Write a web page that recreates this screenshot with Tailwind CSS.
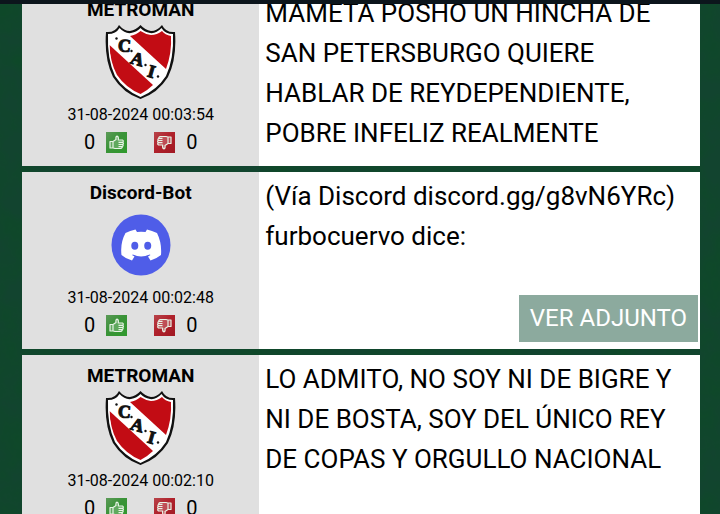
<!DOCTYPE html>
<html lang="es">
<head>
<meta charset="utf-8">
<meta name="viewport" content="width=device-width, initial-scale=1">
<title>Mensajes</title>
<script src="https://cdn.jsdelivr.net/npm/@tailwindcss/browser@4"></script>
</head>
<body class="relative h-screen overflow-hidden bg-[#12442f] font-['Roboto','Liberation_Sans',sans-serif] text-black">
<svg class="absolute inset-0 h-full w-full" aria-hidden="true">
  <defs>
    <filter id="felt" x="0" y="0" width="100%" height="100%" color-interpolation-filters="sRGB">
      <feTurbulence type="fractalNoise" baseFrequency=".03" numOctaves="5" seed="4"/>
      <feColorMatrix values="0 0 0 0 .05  0 0 0 0 .29  0 0 0 0 .15  1.600 0 0 0 -.5"/>
    </filter>
    <linearGradient id="green" x1="0" y1="0" x2="1" y2="1"><stop offset="0" stop-color="#5c9a58"/><stop offset=".45" stop-color="#3a9338"/><stop offset="1" stop-color="#2f9a2c"/></linearGradient>
    <linearGradient id="red" x1="0" y1="0" x2="1" y2="1"><stop offset="0" stop-color="#b8444a"/><stop offset=".45" stop-color="#b0222c"/><stop offset="1" stop-color="#a01822"/></linearGradient>
    <clipPath id="field"><path d="M4.500 10.500Q11 10.500 14.500 4.500Q20 11 25 9.500Q31 9 35.500 4.500Q40 9 46 9.500Q52 10.500 57 4.500Q60 10 67 10.500Q68 35 60 51Q51 65 35.500 72Q20 65 11 51Q3 35 4.500 10.500Z"/></clipPath>
  </defs>
  <rect width="100%" height="100%" filter="url(#felt)"/>
  <symbol id="crest" viewBox="0 0 71 76">
    <path d="M1 8Q10 9 14 1Q19 7 25 7Q31 6 35.500 1Q40 6 46 7Q52 7 57 1Q61 9 70 8Q72 35 63 53Q53 69 35.500 75Q18 69 8 53Q-1 35 1 8Z" fill="#111"/>
    <path d="M3 10Q11 10 14.500 4Q20 10 26 9Q32 8 35.500 4Q39 8 45 9Q51 10 56.500 4Q60 10 68 10Q69 35 61 52Q52 66 35.500 73Q19 66 10 52Q2 35 3 10Z" fill="#fff"/>
    <g clip-path="url(#field)" fill="#c20c14">
      <path d="M25 12Q31 11 35.500 7Q40 10 46 11Q52 11 57 7Q60 11 66 12Q67 29 61 45Z"/>
      <path d="M4.500 21L48 61Q43 66 35.500 70Q21 64 12 51Q5 38 4.500 21Z"/>
    </g>
    <g fill="#111" font-family="Liberation Serif" font-weight="700" font-size="18" text-anchor="middle" stroke="#111" stroke-width="1">
      <text transform="translate(19.500 21.500) rotate(5)" y="6">C</text>
      <text transform="translate(32.500 35) rotate(16)" y="6">A</text>
      <text transform="translate(46.500 47.500) rotate(16)" y="6">I</text>
    </g>
    <g fill="#111"><circle cx="11.500" cy="14.500" r="1.200"/><circle cx="26.500" cy="27" r="1.200"/><circle cx="40.500" cy="41" r="1.200"/><circle cx="53" cy="52.500" r="1.200"/></g>
  </symbol>
  <symbol id="discord" viewBox="0 0 60 62">
    <ellipse cx="30" cy="31" rx="29.500" ry="30.500" fill="#4f5de8"/>
    <path d="M24.500 15.500Q19 16.500 14.500 19Q9 29 10.500 41Q15 45 21 46.500L23.500 42.500L21 41L22 40.500Q30 44.500 38.500 40.500L39.500 41L37 42.500L39.500 46.500Q45 45 50 41Q51 29 46 19Q41 16.500 36 15.500L34.500 18Q30 17.400 26 18Z" fill="#fff"/>
    <ellipse cx="23.800" cy="31.800" rx="3.500" ry="4" fill="#4f5de8"/><ellipse cx="36.700" cy="31.800" rx="3.500" ry="4" fill="#4f5de8"/>
  </symbol>
  <symbol id="hand" viewBox="0 0 21 21">
    <path d="M4 9.500H7V16H4ZM7 9.500L10 7.500Q9.500 4.500 11 4.200Q12.800 4.500 12.300 8H16.500Q18 9 16.700 10.300Q18 11.500 16.800 12.500Q17.600 13.800 16.300 14.600Q16.500 16 15 16.500H9L7 16M12.500 10.300H16.500M12.500 12.500H16.500M12.500 14.600H16" fill="#ffffff33" stroke="#e8f3e6" stroke-width="1.200" stroke-linejoin="round"/>
  </symbol>
  <symbol id="up" viewBox="0 0 21 21"><rect width="21" height="21" fill="url(#green)"/><use href="#hand" width="21" height="21"/></symbol>
  <symbol id="down" viewBox="0 0 21 21"><rect width="21" height="21" fill="url(#red)"/><g transform="rotate(180 10.500 10.500)"><use href="#hand" width="21" height="21"/></g></symbol>
</svg>

<div class="relative z-10 h-1 bg-[#0c151c]"></div>
<main class="relative -mt-[15px] flex flex-col gap-1.5 pr-5 pl-[22px]">
  <article class="flex min-h-[177px] bg-white">
    <aside class="flex w-[35%] shrink-0 flex-col items-center bg-[#e0e0e0] pt-[9px]">
      <h2 class="text-[19px] leading-6 font-bold">METROMAN</h2>
      <div class="flex h-20 items-center"><svg class="h-[76px] w-[71px]" role="img" aria-label="Escudo"><use href="#crest"/></svg></div>
      <time class="text-base leading-[26px]">31-08-2024 00:03:54</time>
      <div class="flex h-7 items-center text-xl">
        <span>0</span><button class="ml-[11px]" aria-label="Me gusta"><svg class="size-[21px]"><use href="#up"/></svg></button>
        <button class="mr-[11px] ml-[27px]" aria-label="No me gusta"><svg class="size-[21px]"><use href="#down"/></svg></button><span>0</span>
      </div>
    </aside>
    <div class="flex flex-1 flex-col px-1.5 pt-1"><p class="text-[26px] leading-10">MAMETA POSHO UN HINCHA DE SAN PETERSBURGO QUIERE HABLAR DE REYDEPENDIENTE, POBRE INFELIZ REALMENTE</p></div>
  </article>

  <article class="flex min-h-[177px] bg-white">
    <aside class="flex w-[35%] shrink-0 flex-col items-center bg-[#e0e0e0] pt-[9px]">
      <h2 class="text-[19px] leading-6 font-bold">Discord-Bot</h2>
      <div class="flex h-20 items-center"><svg class="h-[62px] w-[60px]" role="img" aria-label="Discord"><use href="#discord"/></svg></div>
      <time class="text-base leading-[26px]">31-08-2024 00:02:48</time>
      <div class="flex h-7 items-center text-xl">
        <span>0</span><button class="ml-[11px]" aria-label="Me gusta"><svg class="size-[21px]"><use href="#up"/></svg></button>
        <button class="mr-[11px] ml-[27px]" aria-label="No me gusta"><svg class="size-[21px]"><use href="#down"/></svg></button><span>0</span>
      </div>
    </aside>
    <div class="flex flex-1 flex-col pt-1">
      <p class="px-1.5 text-[26px] leading-10">(Vía Discord discord.gg/g8vN6YRc) furbocuervo dice:</p>
      <button class="mt-auto mr-0.5 mb-[7px] self-end bg-[#8caa9e] px-[11px] text-2xl leading-[47px] text-white">VER ADJUNTO</button>
    </div>
  </article>

  <article class="flex min-h-[177px] bg-white">
    <aside class="flex w-[35%] shrink-0 flex-col items-center bg-[#e0e0e0] pt-[9px]">
      <h2 class="text-[19px] leading-6 font-bold">METROMAN</h2>
      <div class="flex h-20 items-center"><svg class="h-[76px] w-[71px]" role="img" aria-label="Escudo"><use href="#crest"/></svg></div>
      <time class="text-base leading-[26px]">31-08-2024 00:02:10</time>
      <div class="flex h-7 items-center text-xl">
        <span>0</span><button class="ml-[11px]" aria-label="Me gusta"><svg class="size-[21px]"><use href="#up"/></svg></button>
        <button class="mr-[11px] ml-[27px]" aria-label="No me gusta"><svg class="size-[21px]"><use href="#down"/></svg></button><span>0</span>
      </div>
    </aside>
    <div class="flex flex-1 flex-col px-1.5 pt-1"><p class="text-[26px] leading-10">LO ADMITO, NO SOY NI DE BIGRE Y NI DE BOSTA, SOY DEL ÚNICO REY DE COPAS Y ORGULLO NACIONAL</p></div>
  </article>
</main>
</body>
</html>
